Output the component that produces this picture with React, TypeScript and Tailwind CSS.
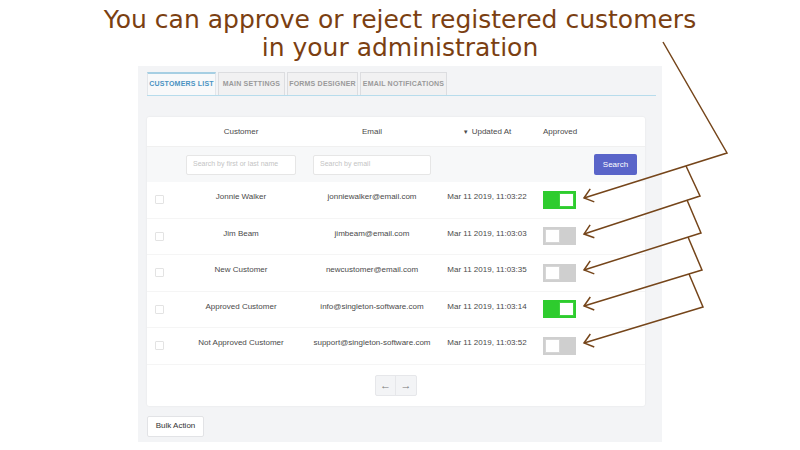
import React from "react";

type Customer = {
  name: string;
  email: string;
  updated: string;
  approved: boolean;
};

const customers: Customer[] = [
  { name: "Jonnie Walker", email: "jonniewalker@email.com", updated: "Mar 11 2019, 11:03:22", approved: true },
  { name: "Jim Beam", email: "jimbeam@email.com", updated: "Mar 11 2019, 11:03:03", approved: false },
  { name: "New Customer", email: "newcustomer@email.com", updated: "Mar 11 2019, 11:03:35", approved: false },
  { name: "Approved Customer", email: "info@singleton-software.com", updated: "Mar 11 2019, 11:03:14", approved: true },
  { name: "Not Approved Customer", email: "support@singleton-software.com", updated: "Mar 11 2019, 11:03:52", approved: false },
];

const tabs = [
  { label: "Customers List", active: true, w: "w-[69px]" },
  { label: "Main Settings", active: false, w: "w-[67px]" },
  { label: "Forms Designer", active: false, w: "w-[71px]" },
  { label: "Email Notifications", active: false, w: "w-[87px]" },
];

// callout lines: start, bend, arrow tip
const callouts: [number, number][][] = [
  [[663, 42], [727, 153], [584, 198]],
  [[686, 166], [700, 196], [584, 234]],
  [[687, 200], [701, 233], [584, 270]],
  [[688, 237], [702, 270], [584, 306]],
  [[689, 274], [703, 307], [584, 343]],
];

const arrowHead = (from: [number, number], tip: [number, number]) => {
  const dx = from[0] - tip[0];
  const dy = from[1] - tip[1];
  const len = Math.hypot(dx, dy);
  const bx = dx / len;
  const by = dy / len;
  const a = (38 * Math.PI) / 180;
  const l = 11;
  const p1 = [tip[0] + l * (bx * Math.cos(a) - by * Math.sin(a)), tip[1] + l * (bx * Math.sin(a) + by * Math.cos(a))];
  const p2 = [tip[0] + l * (bx * Math.cos(-a) - by * Math.sin(-a)), tip[1] + l * (bx * Math.sin(-a) + by * Math.cos(-a))];
  return `M${p1[0]} ${p1[1]} L${tip[0]} ${tip[1]} L${p2[0]} ${p2[1]}`;
};

const Toggle = ({ on }: { on: boolean }) => (
  <div
    className={`w-[33px] h-[18px] p-[2px] flex ${on ? "bg-[#2ecc2e] justify-end" : "bg-[#cfcfcf] justify-start"}`}
  >
    <div className={`w-[15px] h-[14px] bg-white border ${on ? "border-[#3fd23f]" : "border-[#d6d6d6]"}`}></div>
  </div>
);

const App = () => {
  return (
    <div className="relative w-[800px] h-[450px] bg-white overflow-hidden" style={{ fontFamily: '"Liberation Sans", Arial, sans-serif' }}>
      {/* title */}
      <div
        className="h-[66px] pt-[6px] text-center text-[25px] leading-[28px] text-[#7b3f12]"
        style={{ fontFamily: '"DejaVu Sans", sans-serif' }}
      >
        <p>You can approve or reject registered customers</p>
        <p>in your administration</p>
      </div>

      {/* admin panel */}
      <div className="ml-[138px] w-[524px] h-[376px] bg-[#f3f4f6] pl-[9px] pr-[17px] pt-[7px]">
        {/* tabs */}
        <div className="flex items-end gap-[2px] mr-[-11px] border-b border-[#b7dcec] h-[23px]">
          {tabs.map((t) => (
            <div
              key={t.label}
              className={`${t.w} h-[23px] flex items-center justify-center uppercase font-bold text-[7px] tracking-[0.2px] ${
                t.active
                  ? "bg-[#f8f9fa] border-t-2 border-x border-t-[#a6cfe3] border-x-[#e3e6ea] text-[#4a93c2]"
                  : "bg-[#f1f1f2] border border-b-0 border-[#dcdde0] text-[#9a9a9a]"
              }`}
            >
              {t.label}
            </div>
          ))}
        </div>

        {/* card */}
        <div className="mt-[21px] bg-white rounded-[2px] shadow-[0_0_2px_rgba(0,0,0,0.08)] text-[8px] text-[#4a4a4a]">
          <div className="grid grid-cols-[29px_130px_132px_98px_1fr] h-[30px] items-center border-b border-[#f0f0f0]">
            <div></div>
            <div className="text-center">Customer</div>
            <div className="text-center">Email</div>
            <div className="text-center">
              <span className="text-[6px] mr-[3px]">▼</span>Updated At
            </div>
            <div className="pl-[7px]">Approved</div>
          </div>

          <div className="grid grid-cols-[29px_130px_132px_98px_1fr] h-[35px] items-center bg-[#f7f8f9]">
            <div></div>
            <div className="px-[10px]">
              <div className="h-[20px] bg-white border border-[#e6e6e6] rounded-[2px] flex items-center px-[6px] text-[7px] text-[#c4c4c4]">
                Search by first or last name
              </div>
            </div>
            <div className="px-[7px]">
              <div className="h-[20px] bg-white border border-[#e6e6e6] rounded-[2px] flex items-center px-[6px] text-[7px] text-[#c4c4c4]">
                Search by email
              </div>
            </div>
            <div></div>
            <div className="flex justify-end pr-[8px]">
              <div className="w-[43px] h-[21px] bg-[#5a65c9] rounded-[2px] text-white flex items-center justify-center">
                Search
              </div>
            </div>
          </div>

          {customers.map((c) => (
            <div
              key={c.email}
              className="grid grid-cols-[29px_130px_132px_98px_1fr] h-[36.5px] items-center border-b border-[#f5f5f5]"
            >
              <div className="pl-[8px]">
                <div className="w-[9px] h-[9px] border border-[#e3e3e3] rounded-[1px]"></div>
              </div>
              <div className="text-center -mt-[5px]">{c.name}</div>
              <div className="text-center -mt-[5px]">{c.email}</div>
              <div className="text-center -mt-[5px]">{c.updated}</div>
              <div className="pl-[7px]">
                <Toggle on={c.approved} />
              </div>
            </div>
          ))}

          <div className="h-[41px] flex items-center justify-center">
            <div className="flex border border-[#e6e7ea] rounded-[2px] bg-[#f3f4f6] text-[#777] text-[11px]">
              <div className="w-[20px] h-[19px] flex items-center justify-center border-r border-[#e6e7ea]">←</div>
              <div className="w-[20px] h-[19px] flex items-center justify-center">→</div>
            </div>
          </div>
        </div>

        <div className="mt-[10px] w-[57px] h-[21px] bg-white border border-[#e2e3e6] rounded-[2px] flex items-center justify-center text-[8px] text-[#333]">
          Bulk Action
        </div>
      </div>

      {/* callout arrows */}
      <svg className="absolute inset-0 pointer-events-none" width="800" height="450" viewBox="0 0 800 450">
        {callouts.map((pts, i) => (
          <g key={i} fill="none" stroke="#75451a" strokeWidth="1.5" strokeLinejoin="miter">
            <path d={`M${pts[0][0]} ${pts[0][1]} L${pts[1][0]} ${pts[1][1]} L${pts[2][0]} ${pts[2][1]}`} />
            <path d={arrowHead(pts[1], pts[2])} />
          </g>
        ))}
      </svg>
    </div>
  );
};

export default App;
